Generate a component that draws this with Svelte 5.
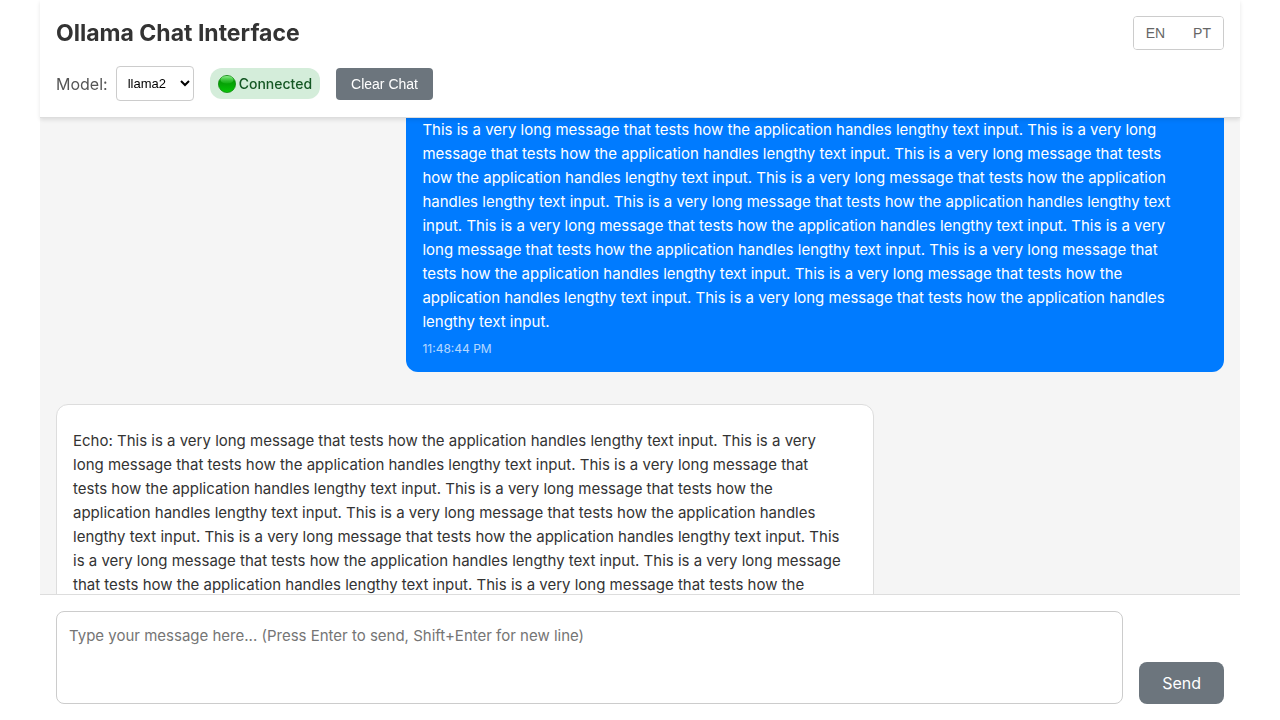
<script>
  import { onMount } from 'svelte';

  const question = `This is a very long message that tests how the application handles lengthy text input. This is a very long
message that tests how the application handles lengthy text input. This is a very long message that tests
how the application handles lengthy text input. This is a very long message that tests how the application
handles lengthy text input. This is a very long message that tests how the application handles lengthy text
input. This is a very long message that tests how the application handles lengthy text input. This is a very
long message that tests how the application handles lengthy text input. This is a very long message that
tests how the application handles lengthy text input. This is a very long message that tests how the
application handles lengthy text input. This is a very long message that tests how the application handles
lengthy text input.`;

  const answer = `Echo: This is a very long message that tests how the application handles lengthy text input. This is a very
long message that tests how the application handles lengthy text input. This is a very long message that
tests how the application handles lengthy text input. This is a very long message that tests how the
application handles lengthy text input. This is a very long message that tests how the application handles
lengthy text input. This is a very long message that tests how the application handles lengthy text input. This
is a very long message that tests how the application handles lengthy text input. This is a very long message
that tests how the application handles lengthy text input. This is a very long message that tests how the
application handles lengthy text input.`;

  let messages = $state([
    { from: 'user', text: question, time: '11:48:44 PM' },
    { from: 'assistant', text: answer, time: '11:48:45 PM' }
  ]);
  let model = $state('llama2');
  let draft = $state('');
  let list;

  onMount(() => {
    // Start with the first line of text against the top of the list.
    const first = list.querySelector('.text');
    list.scrollTop = first.getBoundingClientRect().top - list.getBoundingClientRect().top;
  });

  function send() {
    const text = draft.trim();
    if (!text) return;
    messages.push({ from: 'user', text, time: new Date().toLocaleTimeString('en-US') });
    draft = '';
  }

  function onkeydown(event) {
    if (event.key === 'Enter' && !event.shiftKey) {
      event.preventDefault();
      send();
    }
  }
</script>

<div class="app">
  <header>
    <div class="top">
      <h1>Ollama Chat Interface</h1>
      <div class="languages">
        <button type="button">EN</button>
        <button type="button">PT</button>
      </div>
    </div>
    <div class="controls">
      <div class="model">
        <label for="model">Model:</label>
        <select id="model" bind:value={model}>
          <option value="llama2">llama2</option>
        </select>
      </div>
      <div class="status">
        <svg viewBox="0 0 18 18" width="18" height="18" aria-hidden="true">
          <defs>
            <linearGradient id="body" x1="0" y1="0" x2="0" y2="1">
              <stop offset="0" stop-color="#0a930a" />
              <stop offset="0.5" stop-color="#06a306" />
              <stop offset="0.8" stop-color="#04b804" />
              <stop offset="1" stop-color="#10c410" />
            </linearGradient>
            <linearGradient id="shine" x1="0" y1="0" x2="0" y2="1">
              <stop offset="0" stop-color="#8df08d" />
              <stop offset="1" stop-color="#22c022" stop-opacity="0.4" />
            </linearGradient>
          </defs>
          <circle cx="9" cy="9" r="8.6" fill="url(#body)" stroke="#078207" stroke-width="0.7" />
          <ellipse cx="9" cy="4.8" rx="6.6" ry="3.8" fill="url(#shine)" />
        </svg>
        <span>Connected</span>
      </div>
      <button type="button" class="clear" onclick={() => (messages = [])}>Clear Chat</button>
    </div>
  </header>

  <main bind:this={list}>
    {#each messages as message}
      <article class={message.from}>
        <p class="text">{message.text}</p>
        <time>{message.time}</time>
      </article>
    {/each}
  </main>

  <form onsubmit={(event) => { event.preventDefault(); send(); }}>
    <textarea
      aria-label="Message"
      placeholder="Type your message here... (Press Enter to send, Shift+Enter for new line)"
      bind:value={draft}
      {onkeydown}
    ></textarea>
    <button type="submit">Send</button>
  </form>
</div>

<style>
  :global(body) {
    margin: 0;
    background: #fff;
  }

  .app {
    box-sizing: border-box;
    display: flex;
    flex-direction: column;
    max-width: 1200px;
    height: 100vh;
    margin: 0 auto;
    color: #333;
    font: 15px/24px Inter, sans-serif;
  }

  button {
    cursor: pointer;
  }

  header {
    position: relative;
    z-index: 1;
    display: flex;
    flex-direction: column;
    gap: 16px;
    padding: 16px;
    border-bottom: 1px solid #ddd;
    background: #fff;
    box-shadow: 0 2px 4px rgba(0, 0, 0, 0.1);
  }

  .top {
    display: flex;
    align-items: center;
    justify-content: space-between;
  }

  h1 {
    margin: 0;
    font-size: 23px;
    font-weight: 700;
    line-height: 34px;
  }

  .languages {
    display: flex;
    border: 1px solid #ccc;
    border-radius: 4px;
    overflow: hidden;
  }

  .languages button {
    padding: 8px 12px;
    border: 0;
    background: #fff;
    color: #666;
    font: 14px/16px "Liberation Sans", Arial, sans-serif;
  }

  .languages button + button {
    padding-left: 16px;
  }

  .controls {
    display: flex;
    align-items: center;
    gap: 16px;
  }

  .model {
    display: flex;
    align-items: center;
    gap: 8px;
  }

  .model label {
    color: #555;
    font-size: 16px;
  }

  select {
    height: 35px;
    padding: 0 0 0 7px;
    width: 78px;
    border: 1px solid #ccc;
    border-radius: 4px;
    background: #fff;
    color: #000;
    font: 13px "Liberation Sans", Arial, sans-serif;
  }

  .status {
    display: flex;
    align-items: center;
    gap: 3px;
    height: 31px;
    padding: 0 8px;
    border-radius: 12px;
    background: #d4edda;
    color: #155724;
    font-size: 14px;
    font-weight: 500;
  }

  .clear {
    padding: 8px 15px;
    border: 0;
    border-radius: 4px;
    background: #6c757d;
    color: #fff;
    font: 14px/16px "Liberation Sans", Arial, sans-serif;
  }

  main {
    display: flex;
    flex: 1;
    flex-direction: column;
    gap: 32px;
    min-height: 0;
    padding: 16px;
    overflow-y: auto;
    background: #f5f5f5;
    scrollbar-width: none;
  }

  article {
    box-sizing: border-box;
    flex: none;
    width: 70%;
    padding: 24px 16px 16px;
    border-radius: 12px;
  }

  .user {
    align-self: flex-end;
    background: #007bff;
    color: #fff;
  }

  .assistant {
    align-self: flex-start;
    border: 1px solid #ddd;
    background: #fff;
  }

  .text {
    margin: 0 0 8px;
    overflow-wrap: break-word;
    white-space: pre-line;
  }

  time {
    display: block;
    font-size: 12px;
    line-height: 14px;
    opacity: 0.7;
  }

  form {
    display: flex;
    align-items: flex-end;
    gap: 16px;
    padding: 16px;
    border-top: 1px solid #ddd;
    background: #fff;
  }

  textarea {
    box-sizing: border-box;
    flex: 1;
    min-width: 0;
    height: 93px;
    padding: 12px;
    border: 1px solid #ccc;
    border-radius: 8px;
    resize: none;
    font: inherit;
  }

  textarea::placeholder {
    color: #757575;
  }

  form button {
    padding: 9px 23px;
    border: 0;
    border-radius: 8px;
    background: #6c757d;
    color: #fff;
    font: inherit;
    font-size: 16px;
  }
</style>
